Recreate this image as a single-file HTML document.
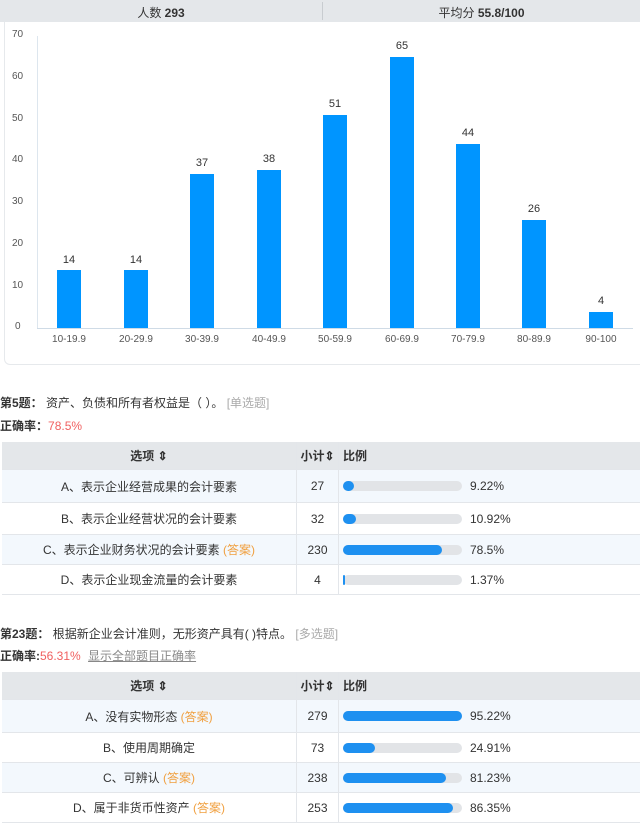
<!DOCTYPE html>
<html><head><meta charset="utf-8"><style>
body{margin:0;width:640px;height:821px;overflow:hidden;background:#fff;font-family:"Liberation Sans","Noto Sans CJK SC",sans-serif;color:#333;position:relative}
.a{position:absolute}
.hdr{top:0;height:22px;background:#e4e7ea;left:0;width:640px;font-size:12px}
.ax{font-size:10px;color:#555}
.bar{position:absolute;background:#0095ff;width:24px}
.vl{position:absolute;font-size:11px;color:#333;width:40px;text-align:center}
.xl{position:absolute;font-size:10px;color:#555;width:60px;text-align:center;top:334px}
table{position:absolute;left:2px;width:640px;border-collapse:collapse;font-size:12px}
td,th{border-right:1px solid #e3e6ea;border-bottom:1px solid #e3e6ea;padding:0}
th{background:#e4e7ea;font-weight:bold;height:27px}
td.o{text-align:center;width:294px}
td.c{text-align:center;width:41px}
tr.alt td{background:#f3f8fd}
.trk{display:inline-block;vertical-align:middle;width:119px;height:10px;background:#e2e4e7;border-radius:5px;margin-left:4px;position:relative}
.fill{position:absolute;left:0;top:0;height:10px;background:#1e90f0;border-radius:5px}
.pc{display:inline-block;vertical-align:middle;margin-left:8px}
.ans{color:#f0a040}
.q{font-size:12px}
</style></head><body>
<div class="a hdr">
 <div class="a" style="left:0;width:322px;text-align:center;top:4px">人数 <b>293</b></div>
 <div class="a" style="left:322px;top:2px;width:1px;height:18px;background:#c8ccd0"></div>
 <div class="a" style="left:323px;width:317px;text-align:center;top:4px">平均分 <b>55.8/100</b></div>
</div>
<div class="a" style="left:4px;top:22px;width:640px;height:342px;border:1px solid #e6e9ec;border-top:none;border-radius:0 0 6px 6px"></div>
<div class="a" style="left:37px;top:36px;width:1px;height:292px;background:#dde6ee"></div>
<div class="a" style="left:37px;top:328px;width:596px;height:1px;background:#cfdbe6"></div>
<div class="a ax" style="left:12px;top:29px">70</div>
<div class="a ax" style="left:12px;top:71px">60</div>
<div class="a ax" style="left:12px;top:113px">50</div>
<div class="a ax" style="left:12px;top:154px">40</div>
<div class="a ax" style="left:12px;top:196px">30</div>
<div class="a ax" style="left:12px;top:238px">20</div>
<div class="a ax" style="left:12px;top:280px">10</div>
<div class="a ax" style="left:15px;top:321px">0</div>

<div class="bar" style="left:57px;top:270px;height:58px"></div><div class="vl" style="left:49px;top:254px">14</div><div class="xl" style="left:39px">10-19.9</div>
<div class="bar" style="left:124px;top:270px;height:58px"></div><div class="vl" style="left:116px;top:254px">14</div><div class="xl" style="left:106px">20-29.9</div>
<div class="bar" style="left:190px;top:174px;height:154px"></div><div class="vl" style="left:182px;top:157px">37</div><div class="xl" style="left:172px">30-39.9</div>
<div class="bar" style="left:257px;top:170px;height:158px"></div><div class="vl" style="left:249px;top:153px">38</div><div class="xl" style="left:239px">40-49.9</div>
<div class="bar" style="left:323px;top:115px;height:213px"></div><div class="vl" style="left:315px;top:98px">51</div><div class="xl" style="left:305px">50-59.9</div>
<div class="bar" style="left:390px;top:57px;height:271px"></div><div class="vl" style="left:382px;top:40px">65</div><div class="xl" style="left:372px">60-69.9</div>
<div class="bar" style="left:456px;top:144px;height:184px"></div><div class="vl" style="left:448px;top:127px">44</div><div class="xl" style="left:438px">70-79.9</div>
<div class="bar" style="left:522px;top:220px;height:108px"></div><div class="vl" style="left:514px;top:203px">26</div><div class="xl" style="left:504px">80-89.9</div>
<div class="bar" style="left:589px;top:312px;height:16px"></div><div class="vl" style="left:581px;top:295px">4</div><div class="xl" style="left:571px">90-100</div>

<div class="a q" style="left:0;top:394px"><b>第5题：</b> 资产、负债和所有者权益是（ ）。 <span style="color:#aaa">[单选题]</span></div>
<div class="a q" style="left:0;top:417px"><b>正确率：</b><span style="color:#f06060">78.5%</span></div>
<table style="top:442px">
<tr><th>选项 ⇕</th><th>小计⇕</th><th style="text-align:left;padding-left:4px">比例</th></tr>
<tr class="alt" style="height:33px"><td class="o">A、表示企业经营成果的会计要素</td><td class="c">27</td><td><span class="trk"><span class="fill" style="width:11px"></span></span><span class="pc">9.22%</span></td></tr>
<tr style="height:32px"><td class="o">B、表示企业经营状况的会计要素</td><td class="c">32</td><td><span class="trk"><span class="fill" style="width:13px"></span></span><span class="pc">10.92%</span></td></tr>
<tr class="alt" style="height:30px"><td class="o">C、表示企业财务状况的会计要素 <span class="ans">(答案)</span></td><td class="c">230</td><td><span class="trk"><span class="fill" style="width:99px"></span></span><span class="pc">78.5%</span></td></tr>
<tr style="height:30px"><td class="o">D、表示企业现金流量的会计要素</td><td class="c">4</td><td><span class="trk"><span class="fill" style="width:2px"></span></span><span class="pc">1.37%</span></td></tr>
</table>

<div class="a q" style="left:0;top:625px"><b>第23题：</b> 根据新企业会计准则，无形资产具有( )特点。 <span style="color:#aaa">[多选题]</span></div>
<div class="a q" style="left:0;top:647px"><b>正确率:</b><span style="color:#f06060">56.31%</span> <span style="color:#888;text-decoration:underline;margin-left:4px">显示全部题目正确率</span></div>
<table style="top:672px">
<tr><th>选项 ⇕</th><th>小计⇕</th><th style="text-align:left;padding-left:4px">比例</th></tr>
<tr class="alt" style="height:33px"><td class="o">A、没有实物形态 <span class="ans">(答案)</span></td><td class="c">279</td><td><span class="trk"><span class="fill" style="width:119px"></span></span><span class="pc">95.22%</span></td></tr>
<tr style="height:30px"><td class="o">B、使用周期确定</td><td class="c">73</td><td><span class="trk"><span class="fill" style="width:32px"></span></span><span class="pc">24.91%</span></td></tr>
<tr class="alt" style="height:30px"><td class="o">C、可辨认 <span class="ans">(答案)</span></td><td class="c">238</td><td><span class="trk"><span class="fill" style="width:103px"></span></span><span class="pc">81.23%</span></td></tr>
<tr style="height:30px"><td class="o">D、属于非货币性资产 <span class="ans">(答案)</span></td><td class="c">253</td><td><span class="trk"><span class="fill" style="width:110px"></span></span><span class="pc">86.35%</span></td></tr>
</table>
</body></html>
